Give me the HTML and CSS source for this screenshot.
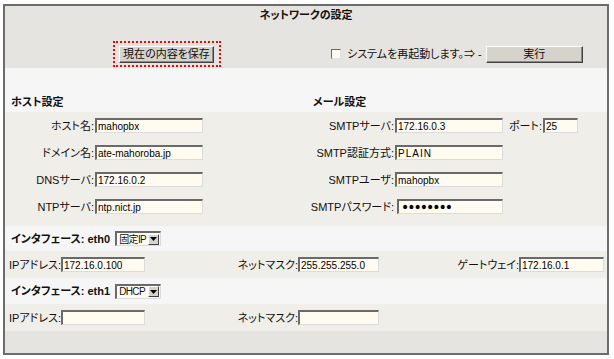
FILE: index.html
```html
<!DOCTYPE html>
<html lang="ja">
<head>
<meta charset="utf-8">
<title>ネットワークの設定</title>
<link rel="stylesheet" href="styles.css">
</head>
<body>
<div class="frame">
  <div class="head">
    <div class="title">ネットワークの設定</div>
    <div class="actions">
      <div class="save-wrap"><button class="btn save" type="button">現在の内容を保存</button></div>
      <div class="reboot">
        <span class="chk"></span>
        <span class="reboot-text">システムを再起動します。⇒ -</span>
        <button class="btn run" type="button">実行</button>
      </div>
    </div>
  </div>

  <div class="sec">
    <div class="sec-left">ホスト設定</div>
    <div class="sec-right">メール設定</div>
  </div>

  <div class="settings">
    <div class="col host">
      <div class="lbl">ホスト名:</div><input class="in w108" type="text" value="mahopbx"><span></span><span></span>
      <div class="lbl">ドメイン名:</div><input class="in w108" type="text" value="ate-mahoroba.jp"><span></span><span></span>
      <div class="lbl">DNSサーバ:</div><input class="in w108" type="text" value="172.16.0.2"><span></span><span></span>
      <div class="lbl">NTPサーバ:</div><input class="in w108" type="text" value="ntp.nict.jp"><span></span><span></span>
    </div>
    <div class="col mail">
      <div class="lbl">SMTPサーバ:</div><input class="in w108" type="text" value="172.16.0.3"><div class="lbl">ポート:</div><input class="in w35" type="text" value="25">
      <div class="lbl">SMTP認証方式:</div><input class="in w108 spaced" type="text" value="PLAIN"><span></span><span></span>
      <div class="lbl">SMTPユーザ:</div><input class="in w108" type="text" value="mahopbx"><span></span><span></span>
      <div class="lbl">SMTPパスワード:</div><input class="in w106 pw" type="password" value="password"><span></span><span></span>
    </div>
  </div>

  <div class="ifhead h25">
    <span>インタフェース: eth0</span>
    <span class="select"><span class="sel-text">固定IP</span><span class="sel-btn"><svg width="7" height="4" viewBox="0 0 7 4"><path d="M0 0H7L3.5 4Z" fill="#000"/></svg></span></span>
  </div>
  <div class="iprow">
    <div class="cell"><span class="lbl2 lw50">IPアドレス:</span><input class="in w84" type="text" value="172.16.0.100"></div>
    <div class="cell"><span class="lbl2 lw62">ネットマスク:</span><input class="in w81" type="text" value="255.255.255.0"></div>
    <div class="cell"><span class="lbl2 lw57">ゲートウェイ:</span><input class="in w85" type="text" value="172.16.0.1"></div>
  </div>

  <div class="ifhead h26">
    <span>インタフェース: eth1</span>
    <span class="select"><span class="sel-text">DHCP</span><span class="sel-btn"><svg width="7" height="4" viewBox="0 0 7 4"><path d="M0 0H7L3.5 4Z" fill="#000"/></svg></span></span>
  </div>
  <div class="iprow">
    <div class="cell"><span class="lbl2 lw50">IPアドレス:</span><input class="in w84" type="text" value=""></div>
    <div class="cell"><span class="lbl2 lw62">ネットマスク:</span><input class="in w81" type="text" value=""></div>
    <div class="cell"></div>
  </div>

  <div class="foot"></div>
</div>
</body>
</html>
```

FILE: styles.css
```css
* { box-sizing: border-box; }

body {
  margin: 0;
  background: #ffffff;
  color: #111;
  font-family: "Liberation Sans", "Noto Sans CJK JP", sans-serif;
  font-size: 11px;
  line-height: 14px;
  font-feature-settings: "palt";
}

.frame {
  margin: 4px 0 0 3px;
  width: 606px;
  border: 2px solid #6c6c6c;
}

/* header */
.head {
  background: #e6e4e0;
  height: 62px;
  padding-top: 2px;
}
.title {
  text-align: center;
  font-weight: bold;
  line-height: 14px;
}
.actions {
  display: flex;
  align-items: center;
  margin-top: 19px;
}
.save-wrap {
  margin-left: 108px;
  border: 2px dotted #ff0000;
  padding: 3px 5px 2px 4px;
  display: flex;
}
.btn {
  height: 17px;
  padding: 0;
  background: #d6d3cc;
  border: 1px solid;
  border-color: #ffffff #404040 #404040 #ffffff;
  box-shadow: inset -1px -1px 0 #8a8a8a;
  font-family: "Liberation Sans", "Noto Sans CJK JP", sans-serif;
  font-size: 11px;
  line-height: 13px;
  color: #111;
  font-feature-settings: "palt";
}
.save { width: 95px; }
.run { width: 97px; margin-left: 4px; }

.reboot {
  display: flex;
  align-items: center;
  margin-left: 110px;
}
.chk {
  width: 10px;
  height: 10px;
  background: #fffbf0;
  border: 1px solid;
  border-color: #6a6a6a #e0e0e0 #e0e0e0 #6a6a6a;
}
.reboot-text { margin-left: 6px; }

/* section headings */
.sec {
  display: grid;
  grid-template-columns: 305px 1fr;
  background: #f6f6f6;
  height: 44px;
  padding-top: 27px;
  font-weight: bold;
}
.sec-left { padding-left: 6px; }
.sec-right { padding-left: 3px; }

/* settings block */
.settings {
  display: grid;
  grid-template-columns: 305px 1fr;
  background: #efeee9;
  height: 114px;
}
.col {
  display: grid;
  grid-auto-rows: 27px;
  align-items: center;
}
.host { grid-template-columns: 89px 109px 1fr 1fr; }
.mail { grid-template-columns: 84px 109px 39px 35px; }
.host .in, .mail .in { margin-left: 1px; }

.lbl {
  display: flex;
  justify-content: flex-end;
  white-space: nowrap;
}

/* inputs */
.in {
  height: 15px;
  padding: 0 1px;
  background: #fffbf0;
  border-style: solid;
  border-width: 2px 1px 1px 2px;
  border-color: #6a6a6a #dcdcdc #dcdcdc #6a6a6a;
  font-family: "Liberation Sans", sans-serif;
  font-size: 10px;
  color: #000;
  outline: none;
}
.w108 { width: 108px; }
.w106 { width: 106px; }
.w35 { width: 35px; }
.w84 { width: 84px; }
.w81 { width: 81px; }
.w85 { width: 85px; }
.spaced { letter-spacing: 1px; }
.mail .pw {
  font-family: "DejaVu Sans", sans-serif;
  font-size: 14px;
  letter-spacing: -2px;
  margin-left: 3px;
  padding-left: 2px;
}

/* interfaces */
.ifhead {
  display: flex;
  align-items: center;
  background: #f6f6f6;
  padding-left: 6px;
  font-weight: bold;
}
.h25 { height: 25px; }
.h26 { height: 26px; }

.select {
  display: flex;
  align-items: center;
  margin-left: 5px;
  width: 46px;
  height: 15px;
  background: #fffbf0;
  border-style: solid;
  border-width: 2px 1px 1px 2px;
  border-color: #6a6a6a #dcdcdc #dcdcdc #6a6a6a;
  font-weight: normal;
  font-size: 10px;
  padding-left: 2px;
  overflow: hidden;
}
.sel-text { flex: 1; line-height: 11px; white-space: nowrap; letter-spacing: -0.6px; overflow: hidden; }
.sel-btn {
  flex: none;
  width: 11px;
  height: 11px;
  margin-right: 1px;
  display: flex;
  align-items: center;
  justify-content: center;
  background: #d6d3cc;
  border: 1px solid;
  border-color: #ffffff #404040 #404040 #ffffff;
}

.iprow {
  display: grid;
  grid-template-columns: 225px 226px 1fr;
  align-items: center;
  height: 27px;
  background: #efeee9;
  padding-left: 6px;
}
.cell {
  display: flex;
  align-items: center;
  white-space: nowrap;
}
.lbl2 {
  display: flex;
  justify-content: flex-end;
  flex: none;
}
.lw50 { width: 50px; }
.lw62 { width: 62px; }
.lw57 { width: 57px; }

.foot {
  height: 22px;
  background: #e6e4e0;
}
```
